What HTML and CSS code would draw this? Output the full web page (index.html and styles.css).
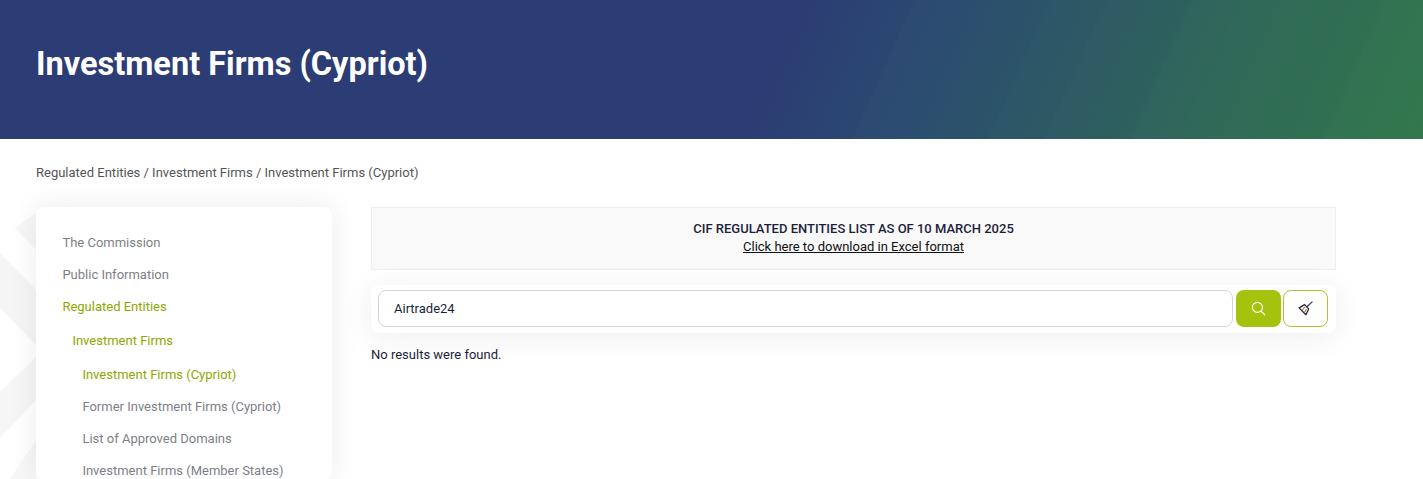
FILE: index.html
```html
<!DOCTYPE html>
<html lang="en">
<head>
<meta charset="utf-8">
<title>Investment Firms (Cypriot)</title>
<link rel="stylesheet" href="styles.css">
</head>
<body>
<header class="hero"><h1>Investment Firms (Cypriot)</h1></header>
<div class="page">
  <svg class="deco" width="36" height="272" viewBox="0 0 36 272" aria-hidden="true">
    <path d="M15 21 L36 6 V43 Z" fill="#f7f7f7"/>
    <path d="M0 46 L36 83 V138 L0 101 Z" fill="#f5f5f5"/>
    <path d="M36 150 L0 185 V231 L36 193 Z" fill="#f6f6f6"/>
    <path d="M36 233 L10 272 H36 Z" fill="#f7f7f7"/>
  </svg>
  <nav class="crumbs">Regulated Entities / Investment Firms / Investment Firms (Cypriot)</nav>
  <div class="columns">
    <aside class="side">
      <ul class="menu">
        <li><a>The Commission</a></li>
        <li><a>Public Information</a></li>
        <li><a class="on">Regulated Entities</a>
          <ul class="sub">
            <li><a class="on">Investment Firms</a>
              <ul class="sub2">
                <li><a class="on">Investment Firms (Cypriot)</a></li>
                <li><a>Former Investment Firms (Cypriot)</a></li>
                <li><a>List of Approved Domains</a></li>
                <li><a>Investment Firms (Member States)</a></li>
              </ul>
            </li>
          </ul>
        </li>
      </ul>
    </aside>
    <main class="content">
      <div class="notice">
        <strong>CIF REGULATED ENTITIES LIST AS OF 10 MARCH 2025</strong>
        <a class="dl">Click here to download in Excel format</a>
      </div>
      <div class="search">
        <input class="field" type="text" value="Airtrade24">
        <button class="btn go" type="button" aria-label="Search">
          <svg class="ico-search" width="15" height="15" viewBox="0 0 15 15" fill="none" stroke="#fff" stroke-width="1.1"><circle cx="6.4" cy="6.4" r="5"/><path d="M10 10 L13.8 13.8" stroke-linecap="round"/></svg>
        </button>
        <button class="btn clear" type="button" aria-label="Clear">
          <svg width="15" height="15" viewBox="0 0 14 14" fill="none"><path d="M8.6 5.2 L13.2 0.8" stroke="#2f4272" stroke-width="1.2" stroke-linecap="round"/><path d="M6.2 3.4 L10 7.4 L7.4 12.8 L1 6.4 Z" stroke="#24263a" stroke-width="1.2" stroke-linejoin="round"/><path d="M4 8.6 L6.4 5.4 M6 10.6 L8 7.8" stroke="#b9773f" stroke-width="1"/></svg>
        </button>
      </div>
      <p class="empty">No results were found.</p>
    </main>
  </div>
</div>
</body>
</html>
```
FILE: styles.css
```css
* { box-sizing: border-box; }
html, body { margin: 0; height: 479px; overflow: hidden; }
body { font-family: Roboto, "Liberation Sans", sans-serif; font-size: 13px; color: #1c1f3c; background: #fff; }
.hero {
  height: 139px;
  padding: 0 36px;
  display: flex;
  align-items: center;
  background:
    linear-gradient(114deg,
      transparent 61.6%, rgba(255,255,255,.012) 61.6%, transparent 70.7%,
      rgba(255,255,255,.012) 70.7%, transparent 74.5%,
      rgba(255,255,255,.012) 74.5%, transparent 80.3%,
      rgba(255,255,255,.012) 80.3%, transparent 93.3%,
      rgba(255,255,255,.012) 93.3%, transparent 100%),
    linear-gradient(114deg, #2c3c74 0, #2c3c74 54%, #2a4b70 64%, #2d5a62 75.6%, #2e6758 84%, #32784c 100%);
}
.hero h1 { margin: 0 0 10px; color: #fff; font-size: 32.5px; font-weight: 700; line-height: 1.2; }
.page { position: relative; padding: 0 36px; }
.deco { position: absolute; left: 0; top: 68px; }
.crumbs { height: 68px; padding-top: 26px; line-height: 15px; font-size: 13px; color: #555; }
.columns { display: flex; align-items: flex-start; position: relative; }
.side {
  width: 296px;
  flex: none;
  background: #fff;
  border-radius: 8px;
  box-shadow: 0 0 30px rgba(0,0,0,.08);
  padding: 20px 26px 20px 26.4px;
  height: 272px;
  overflow: hidden;
}
.menu, .sub, .sub2 { list-style: none; margin: 0; padding: 0; }
.menu a { display: block; height: 32px; line-height: 32px; color: #7d7f88; font-size: 13px; }
.menu a.on { color: #8ea800; }
.sub { padding-left: 10px; margin-top: 2px; }
.sub2 { padding-left: 10px; margin-top: 2px; }
.content { width: 965px; margin-left: 39px; }
.notice {
  height: 63px;
  background: #f9f9f9;
  border: 1px solid #eeeeee;
  text-align: center;
  padding-top: 12px;
  line-height: 18px;
  font-size: 13px;
}
.notice strong { display: block; font-weight: 500; }
.dl { color: #111; text-decoration: underline; }
.search {
  display: flex;
  gap: 3px;
  margin-top: 15px;
  padding: 5px 8px 6px 7px;
  height: 48px;
  background: #fff;
  border-radius: 8px;
  box-shadow: 0 4px 30px rgba(0,0,0,.07);
}
.field {
  flex: 1;
  min-width: 0;
  height: 37px;
  border: 1px solid #d3d5de;
  border-radius: 8px;
  padding: 0 15px;
  font: 13px Roboto, sans-serif;
  color: #1c1f3c;
  outline: none;
}
.btn { width: 45px; height: 37px; border-radius: 8px; display: flex; align-items: center; justify-content: center; padding: 0; }
.go { background: #a5c20d; border: 0; padding-right: 1px; }
.clear { background: #fff; border: 1px solid #a8c62e; margin-left: -1px; }
.empty { margin: 13px 0 0; line-height: 18px; font-size: 13px; }
```
